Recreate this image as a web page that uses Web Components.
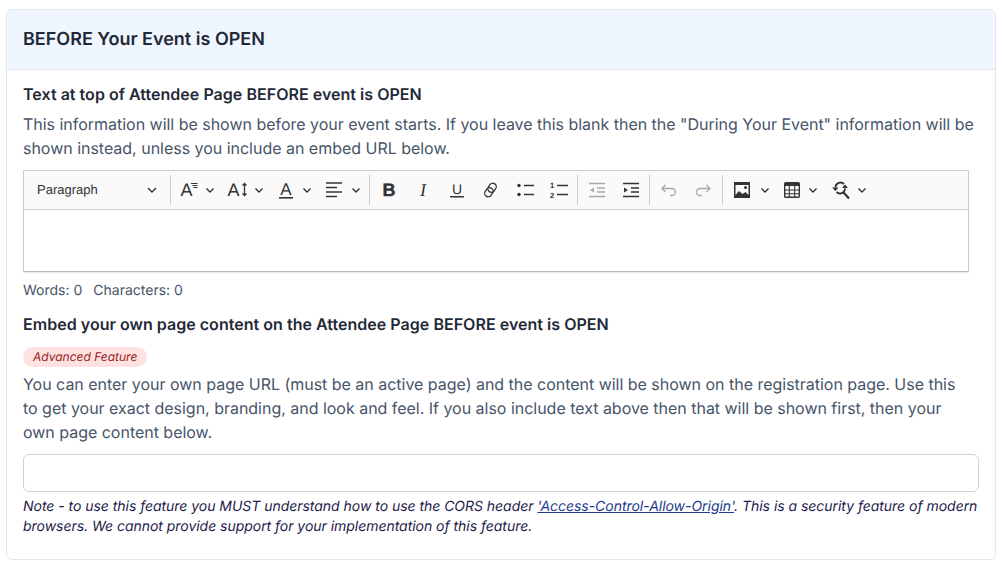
<!DOCTYPE html>
<html lang="en">
<head>
<meta charset="utf-8">
<title>Before Your Event is Open</title>
<style>
  html, body { margin: 0; background: #fff; }
  body { padding: 9px 6px; font-family: Inter, "Liberation Sans", sans-serif; text-rendering: geometricPrecision; }
  a { color: #1e3a8a; }
</style>
</head>
<body>
<event-card heading="BEFORE Your Event is OPEN">
  <field-label>Text at top of Attendee Page BEFORE event is OPEN</field-label>
  <help-text>This information will be shown before your event starts. If you leave this blank then the "During Your Event" information will be shown instead, unless you include an embed URL below.</help-text>
  <rich-editor></rich-editor>
  <field-label style="margin-top:11px">Embed your own page content on the Attendee Page BEFORE event is OPEN</field-label>
  <feature-badge>Advanced Feature</feature-badge>
  <help-text style="margin-top:7px">You can enter your own page URL (must be an active page) and the content will be shown on the registration page. Use this to get your exact design, branding, and look and feel. If you also include text above then that will be shown first, then your own page content below.</help-text>
  <url-input></url-input>
  <field-note>Note - to use this feature you MUST understand how to use the CORS header <a href="#">'Access-Control-Allow-Origin'</a>. This is a security feature of modern browsers. We cannot provide support for your implementation of this feature.</field-note>
</event-card>

<script>
// card with the blue heading bar
class EventCard extends HTMLElement {
  constructor() {
    super();
    this.attachShadow({ mode: "open" });
    this.shadowRoot.innerHTML = `<style>
      :host { display: block; box-sizing: border-box; width: 990px; height: 551px; border: 1px solid #e5e7eb; border-radius: 6px; overflow: hidden; }
      header { height: 60px; box-sizing: border-box; padding: 0 16px; display: flex; align-items: center; background: #eff6ff; border-bottom: 1px solid #e5e7eb; font-size: 18px; font-weight: 600; color: #1f2937; }
      main { padding: 12px 16px 0; }
    </style>
    <header></header>
    <main><slot></slot></main>`;
    this.shadowRoot.querySelector("header").textContent = this.getAttribute("heading");
  }
}
customElements.define("event-card", EventCard);

class FieldLabel extends HTMLElement {
  constructor() {
    super();
    this.attachShadow({ mode: "open" });
    this.shadowRoot.innerHTML = `<style>
      :host { display: block; font-size: 16px; line-height: 24px; font-weight: 600; letter-spacing: .03px; color: #1f2937; }
    </style><slot></slot>`;
  }
}
customElements.define("field-label", FieldLabel);

class HelpText extends HTMLElement {
  constructor() {
    super();
    this.attachShadow({ mode: "open" });
    this.shadowRoot.innerHTML = `<style>
      :host { display: block; margin-top: 6px; padding-right: 5px; font-size: 16px; line-height: 24px; letter-spacing: -.02px; color: #475569; }
    </style><slot></slot>`;
  }
}
customElements.define("help-text", HelpText);

class FeatureBadge extends HTMLElement {
  constructor() {
    super();
    this.attachShadow({ mode: "open" });
    this.shadowRoot.innerHTML = `<style>
      :host { display: block; margin-top: 9px; height: 20px; }
      span { display: inline-block; height: 20px; line-height: 20px; padding: 0 10px; border-radius: 10px; background: #fee2e2; color: #991b1b; font-size: 12px; font-style: italic; }
    </style><span><slot></slot></span>`;
  }
}
customElements.define("feature-badge", FeatureBadge);

class UrlInput extends HTMLElement {
  constructor() {
    super();
    this.attachShadow({ mode: "open" });
    this.shadowRoot.innerHTML = `<style>
      :host { display: block; margin-top: 10px; }
      input { display: block; box-sizing: border-box; width: 100%; height: 38px; margin: 0; border: 1px solid #cbd5e1; border-radius: 6px; background: #fff; outline: none; }
    </style><input type="text">`;
  }
}
customElements.define("url-input", UrlInput);

class FieldNote extends HTMLElement {
  constructor() {
    super();
    this.attachShadow({ mode: "open" });
    this.shadowRoot.innerHTML = `<style>
      :host { display: block; margin-top: 5px; font-size: 14px; line-height: 20px; font-style: italic; letter-spacing: -.035px; color: #1e1b4b; }
    </style><slot></slot>`;
  }
}
customElements.define("field-note", FieldNote);

// icons of the editor toolbar, all on a 24 box
const INK = "#333";
const OFF = "#a8a8a8";
const ICONS = {
  fontfamily: `<text x="2.500" y="18" font-family="Liberation Sans" font-size="18" fill="${INK}">A</text>
    <path d="M13 5.500h6.500M14.500 7.500h5M15.500 9.500h4" stroke="${INK}" stroke-width="1.100" fill="none"/>`,
  lineheight: `<text x="2.500" y="18" font-family="Liberation Sans" font-size="18" fill="${INK}">A</text>
    <path d="M19.500 6v11M17.500 7.500 19.500 5.500 21.500 7.500M17.500 15.500 19.500 17.500 21.500 15.500" stroke="${INK}" stroke-width="1.300" fill="none"/>`,
  color: `<text x="12" y="16.500" text-anchor="middle" font-family="Liberation Sans" font-size="17" fill="${INK}">A</text>
    <rect x="5" y="19" width="14" height="1.600" fill="${INK}"/>`,
  align: `<path d="M4 5h16M4 9.500h11M4 14h16M4 18.500h11" stroke="${INK}" stroke-width="1.500" fill="none"/>`,
  bold: `<text x="12" y="18" text-anchor="middle" font-family="Liberation Sans" font-weight="700" font-size="18" stroke="${INK}" stroke-width=".4" fill="${INK}">B</text>`,
  italic: `<text x="12" y="18" text-anchor="middle" font-family="Liberation Serif" font-style="italic" font-size="18" fill="${INK}">I</text>`,
  underline: `<text x="12" y="15.500" text-anchor="middle" font-family="Liberation Sans" font-size="14" fill="${INK}">U</text>
    <rect x="5" y="18" width="14" height="1.500" fill="${INK}"/>`,
  link: `<g fill="none" stroke="${INK}" stroke-width="1.300" transform="rotate(-55 11.500 12)"><rect x="4" y="8.500" width="9.500" height="7" rx="3.500"/><rect x="9.500" y="8.500" width="9.500" height="7" rx="3.500"/></g>`,
  bullets: `<circle cx="6" cy="7.500" r="1.700" fill="${INK}"/><circle cx="6" cy="16.500" r="1.700" fill="${INK}"/>
    <path d="M11 7.500H21M11 16.500H21" stroke="${INK}" stroke-width="1.600"/>`,
  numbers: `<text x="5" y="10" text-anchor="middle" font-family="Liberation Sans" font-weight="700" font-size="7.500" fill="${INK}">1</text>
    <text x="5" y="20" text-anchor="middle" font-family="Liberation Sans" font-weight="700" font-size="7.500" fill="${INK}">2</text>
    <path d="M10 7.500H21M10 16.500H21" stroke="${INK}" stroke-width="1.600"/>`,
  outdent: `<path d="M4 5.500h16M12 10h8M12 14h8M4 18.500h16" stroke="${OFF}" stroke-width="1.500"/><path d="M9 9.500v5l-4-2.500z" fill="${OFF}"/>`,
  indent: `<path d="M4 5.500h16M12 10h8M12 14h8M4 18.500h16" stroke="${INK}" stroke-width="1.500"/><path d="M5 9.500v5l4-2.500z" fill="${INK}"/>`,
  undo: `<path d="M8.500 7 5 10.500 8.500 14M5 10.500h10a3.500 3.500 0 0 1 0 7h-2" fill="none" stroke="${OFF}" stroke-width="1.300"/>`,
  redo: `<path d="M15.500 7 19 10.500 15.500 14M19 10.500H9a3.500 3.500 0 0 0 0 7h2" fill="none" stroke="${OFF}" stroke-width="1.300"/>`,
  image: `<path fill-rule="evenodd" d="M4 4h16v16H4zm1.500 3v10l3.500-4 3.500 3 3-2 3 3V7z" fill="${INK}"/><circle cx="15.500" cy="9.500" r="1.500" fill="${INK}"/>`,
  table: `<rect x="4.700" y="4.700" width="14.600" height="14.600" rx="1" fill="none" stroke="${INK}" stroke-width="1.400"/><path d="M4 5h16v3H4z" fill="${INK}"/><path d="M4 12h16M4 15.700h16M9.300 8v11M14.700 8v11" stroke="${INK}" stroke-width="1.100"/>`,
  search: `<path d="M6.500 9.500a5 5 0 0 1 8.500-3.500M16 10.500a5 5 0 0 1-8.500 3.500" fill="none" stroke="${INK}" stroke-width="1.800"/><path d="M14.500 14.500 20 20.500" stroke="${INK}" stroke-width="2.200"/><path d="M3 9.500h6.500L6.500 13zM13 10h6l-3-3.500z" fill="${INK}"/>`
};

// one toolbar button, chevron attribute is the gap before the split arrow
class ToolButton extends HTMLElement {
  constructor() {
    super();
    this.attachShadow({ mode: "open" });
    const gap = this.getAttribute("chevron");
    const w = this.getAttribute("w") || (gap ? 48 : 34);
    this.shadowRoot.innerHTML = `<style>
      :host { display: flex; align-items: center; box-sizing: border-box; width: ${w}px; height: 38px; padding-left: 5px; }
      svg { display: block; flex: none; }
    </style>
    <svg width="24" height="24" viewBox="0 0 24 24">${ICONS[this.getAttribute("icon")]}</svg>
    ${gap ? `<svg style="margin-left:${gap}px" width="10" height="10" viewBox="0 0 10 10"><path d="M1.500 3.500 5 7l3.500-3.500" fill="none" stroke="${INK}" stroke-width="1.400"/></svg>` : ""}`;
  }
}
customElements.define("tool-button", ToolButton);

class RichEditor extends HTMLElement {
  constructor() {
    super();
    this.attachShadow({ mode: "open" });
    this.shadowRoot.innerHTML = `<style>
      :host { display: block; margin-top: 10px; width: 946px; }
      .frame { box-sizing: border-box; height: 102px; border: 1px solid #ccc; border-bottom-color: #bbb; box-shadow: 0 1px 1px rgba(0,0,0,.08); display: flex; flex-direction: column; background: #fff; }
      .bar { display: flex; height: 38px; flex: none; background: #fafafa; border-bottom: 1px solid #ccc; }
      .select { width: 146px; box-sizing: border-box; flex: none; display: flex; align-items: center; justify-content: space-between; padding: 0 13px; font: 13px/38px "Liberation Sans", sans-serif; color: #333; }
      .group { display: flex; padding-left: 3px; flex: none; position: relative; box-sizing: border-box; }
      .group::before { content: ""; position: absolute; left: 0; top: 4px; bottom: 4px; width: 1px; background: #ccc; }
      .status { margin-top: 9px; display: flex; gap: 11px; font-size: 14px; line-height: 20px; color: #475569; }
    </style>
    <div class="frame">
      <div class="bar">
        <div class="select"><span>Paragraph</span><svg width="10" height="10" viewBox="0 0 10 10"><path d="M1 3l4 4 4-4" fill="none" stroke="#333" stroke-width="1.400"/></svg></div>
        <div class="group" style="width:199px">
          <tool-button icon="fontfamily" chevron="3" w="47"></tool-button>
          <tool-button icon="lineheight" chevron="5" w="49"></tool-button>
          <tool-button icon="color" chevron="4"></tool-button>
          <tool-button icon="align" chevron="5"></tool-button>
        </div>
        <div class="group" style="width:208px">
          <tool-button icon="bold"></tool-button>
          <tool-button icon="italic"></tool-button>
          <tool-button icon="underline"></tool-button>
          <tool-button icon="link"></tool-button>
          <tool-button icon="bullets"></tool-button>
          <tool-button icon="numbers"></tool-button>
        </div>
        <div class="group" style="width:72px">
          <tool-button icon="outdent"></tool-button>
          <tool-button icon="indent"></tool-button>
        </div>
        <div class="group" style="width:73px">
          <tool-button icon="undo"></tool-button>
          <tool-button icon="redo"></tool-button>
        </div>
        <div class="group">
          <tool-button icon="image" chevron="6" w="50"></tool-button>
          <tool-button icon="table" chevron="4" w="49"></tool-button>
          <tool-button icon="search" chevron="4"></tool-button>
        </div>
      </div>
    </div>
    <div class="status"><span>Words: 0</span><span>Characters: 0</span></div>`;
  }
}
customElements.define("rich-editor", RichEditor);
</script>
</body>
</html>
